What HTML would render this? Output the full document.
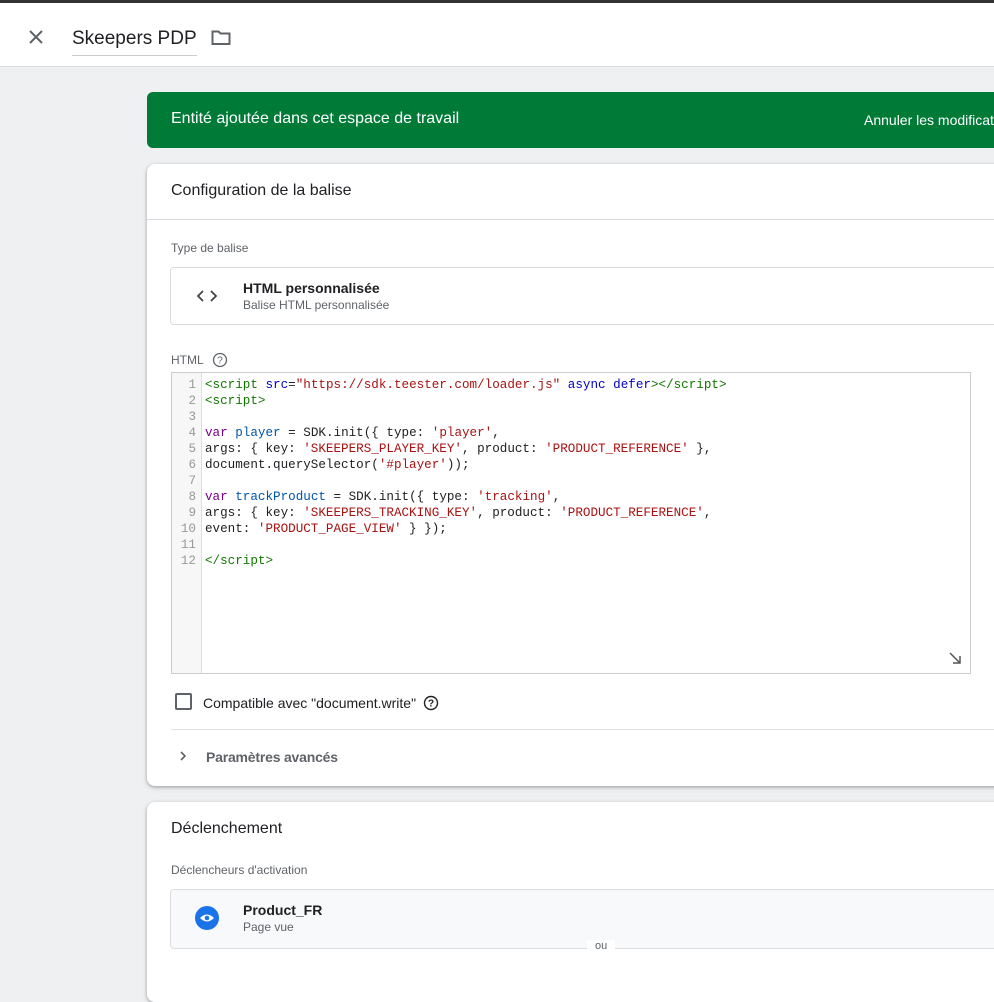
<!DOCTYPE html>
<html><head><meta charset="utf-8"><style>
*{margin:0;padding:0;box-sizing:border-box}
body{width:994px;height:946px;overflow:hidden;background:#eff0f2;font-family:"Liberation Sans",Arial,sans-serif;color:#202124;position:relative}
.abs{position:absolute}
.top{left:0;top:0;width:994px;height:3px;background:#333}
.hdr{left:0;top:3px;width:994px;height:64px;background:#fff;border-bottom:1px solid #dadce0}
.title{left:72px;top:25px;font-size:19px;color:#202124;border-bottom:1px solid #ccc;padding-bottom:5px;width:125px;white-space:nowrap}
.banner{left:147px;top:92px;width:860px;height:56px;background:#007a37;border-radius:6px;color:#fff;font-size:16px}
.card{left:147px;background:#fff;border-radius:8px;width:860px;box-shadow:0 1px 3px rgba(0,0,0,.25),0 2px 6px rgba(0,0,0,.12)}
.lbl{font-size:12px;color:#5f6368}
.code{font-family:"Liberation Mono",monospace;font-size:12.6px;line-height:16px;white-space:pre}
.g{color:#170}.b{color:#00c}.r{color:#a11}.p{color:#708}.k{color:#05a}
.ln{color:#999;text-align:right;width:24px}
</style></head><body>
<div class="abs top"></div>
<div class="abs hdr">
 <svg class="abs" style="left:27px;top:25px" width="18" height="18" viewBox="0 0 18 18"><path d="M3 3L15 15M15 3L3 15" stroke="#5f6368" stroke-width="2"/></svg>
 <div class="abs title">Skeepers PDP</div>
 <svg class="abs" style="left:211px;top:26px" width="20" height="17" viewBox="0 0 20 17"><path d="M1.5 2.5h6l2 2h9v10.5h-17z" fill="none" stroke="#5f6368" stroke-width="2"/></svg>
</div>
<div class="abs banner"><span class="abs" style="left:24px;top:18px">Entité ajoutée dans cet espace de travail</span><span class="abs" style="left:717px;top:20px;font-size:14px;white-space:nowrap">Annuler les modifications</span></div>

<div class="abs card" style="top:164px;height:622px">
 <div class="abs" style="left:24px;top:18px;font-size:16px">Configuration de la balise</div>
 <div class="abs" style="left:0;top:55px;width:860px;height:1px;background:#dadce0"></div>
 <div class="abs lbl" style="left:24px;top:77px">Type de balise</div>
 <div class="abs" style="left:23px;top:103px;width:850px;height:58px;border:1px solid #dadce0;border-radius:4px">
  <svg class="abs" style="left:25px;top:20px" width="22" height="16" viewBox="0 0 22 16"><path d="M7 3L2 8L7 13M15 3L20 8L15 13" fill="none" stroke="#444" stroke-width="1.8"/></svg>
  <div class="abs" style="left:72px;top:12px;font-size:14px;font-weight:bold">HTML personnalisée</div>
  <div class="abs" style="left:72px;top:30px;font-size:12px;color:#5f6368">Balise HTML personnalisée</div>
 </div>
 <div class="abs lbl" style="left:24px;top:189px">HTML</div>
 <svg class="abs" style="left:65px;top:188px" width="16" height="16" viewBox="0 0 16 16"><circle cx="8" cy="8" r="6.5" fill="none" stroke="#5f6368" stroke-width="1.3"/><text x="8" y="11.5" font-size="10" text-anchor="middle" fill="#5f6368" font-family="Liberation Sans">?</text></svg>
 <div class="abs" style="left:24px;top:208px;width:800px;height:302px;border:1px solid #ccc;background:#fff">
  <div class="abs" style="left:0;top:0;width:30px;height:300px;background:#f7f7f7;border-right:1px solid #ddd"></div>
  <div class="abs code ln" style="left:0;top:4px">1
2
3
4
5
6
7
8
9
10
11
12</div>
  <div class="abs code" style="left:33px;top:4px"><span class="g">&lt;script</span> <span class="b">src</span>=<span class="r">"https://sdk.teester.com/loader.js"</span> <span class="b">async</span> <span class="b">defer</span><span class="g">&gt;&lt;/script&gt;</span>
<span class="g">&lt;script&gt;</span>

<span class="p">var</span> <span class="k">player</span> = SDK.init({ type: <span class="r">'player'</span>,
args: { key: <span class="r">'SKEEPERS_PLAYER_KEY'</span>, product: <span class="r">'PRODUCT_REFERENCE'</span> },
document.querySelector(<span class="r">'#player'</span>));

<span class="p">var</span> <span class="k">trackProduct</span> = SDK.init({ type: <span class="r">'tracking'</span>,
args: { key: <span class="r">'SKEEPERS_TRACKING_KEY'</span>, product: <span class="r">'PRODUCT_REFERENCE'</span>,
event: <span class="r">'PRODUCT_PAGE_VIEW'</span> } });

<span class="g">&lt;/script&gt;</span></div>
  <svg class="abs" style="left:776px;top:278px" width="14" height="14" viewBox="0 0 14 14"><path d="M2 2L12 12M12 5V12H5" fill="none" stroke="#555" stroke-width="1.5"/></svg>
 </div>
 <div class="abs" style="left:28px;top:529px;width:17px;height:17px;border:2px solid #5f6368;border-radius:2px"></div>
 <div class="abs" style="left:56px;top:531px;font-size:14px">Compatible avec "document.write"</div>
 <svg class="abs" style="left:276px;top:531px" width="16" height="16" viewBox="0 0 16 16"><circle cx="8" cy="8" r="6.5" fill="none" stroke="#202124" stroke-width="1.4"/><text x="8" y="11.5" font-size="10" font-weight="bold" text-anchor="middle" fill="#202124" font-family="Liberation Sans">?</text></svg>
 <div class="abs" style="left:24px;top:565px;width:836px;height:1px;background:#e0e0e0"></div>
 <svg class="abs" style="left:31px;top:586px" width="10" height="12" viewBox="0 0 10 12"><path d="M3 2L7 6L3 10" fill="none" stroke="#5f6368" stroke-width="1.6"/></svg>
 <div class="abs" style="left:59px;top:585px;font-size:14px;color:#5f6368;font-weight:bold;letter-spacing:-.2px">Paramètres avancés</div>
</div>

<div class="abs card" style="top:802px;height:200px">
 <div class="abs" style="left:24px;top:18px;font-size:16px">Déclenchement</div>
 <div class="abs lbl" style="left:24px;top:61px">Déclencheurs d'activation</div>
 <div class="abs" style="left:23px;top:87px;width:850px;height:60px;border:1px solid #dadce0;border-radius:4px;background:#f8f9fa">
  <svg class="abs" style="left:24px;top:16px" width="24" height="24" viewBox="0 0 24 24"><circle cx="12" cy="12" r="12" fill="#1a73e8"/><path d="M5 12Q12 5 19 12Q12 19 5 12Z" fill="#fff"/><circle cx="12" cy="12" r="2.3" fill="#1a73e8"/></svg>
  <div class="abs" style="left:72px;top:12px;font-size:14px;font-weight:bold">Product_FR</div>
  <div class="abs" style="left:72px;top:30px;font-size:12px;color:#5f6368">Page vue</div>
  <div class="abs" style="left:416px;top:50px;padding:0 8px;background:#fff;font-size:11px;color:#5f6368">ou</div>
 </div>
</div>
</body></html>
